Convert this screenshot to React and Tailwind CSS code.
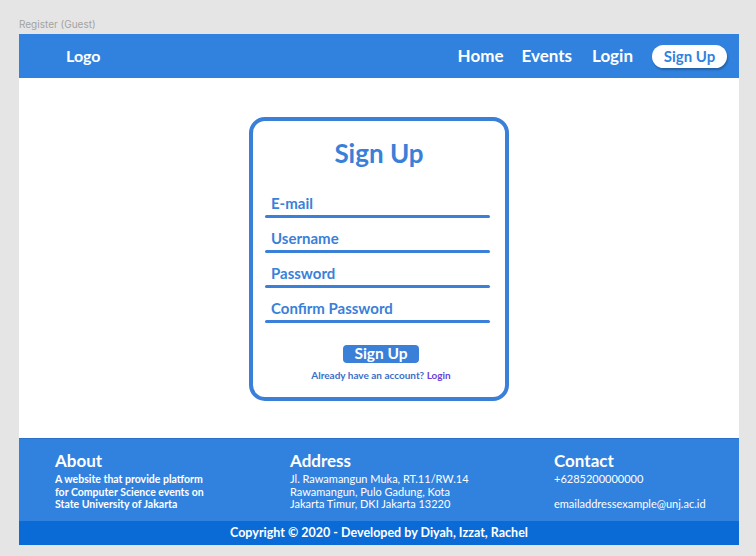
import React from "react";

const fields = ["E-mail", "Username", "Password", "Confirm Password"];

const NavBar = () => (
  <div className="h-[44px] bg-[#3182de] flex items-center pl-[47px] pr-[12px]">
    <span className="text-white font-bold text-[16px]">Logo</span>
    <div className="ml-auto flex items-center">
      <a className="text-white font-bold text-[17px]">Home</a>
      <a className="text-white font-bold text-[17px] ml-[18px]">Events</a>
      <a className="text-white font-bold text-[17px] ml-[20px]">Login</a>
      <button className="ml-[19px] h-[23px] w-[75px] rounded-full bg-white text-[#3182de] font-bold text-[15px] leading-none shadow-[1px_2px_2px_rgba(0,0,0,0.25)]">
        Sign Up
      </button>
    </div>
  </div>
);

const SignUpCard = () => (
  <div className="w-[260px] h-[284px] border-[4px] border-[#3a7fd8] rounded-[16px] bg-white flex flex-col pt-[18px] px-[12px]">
    <h1 className="text-center text-[26px] leading-[28px] font-bold text-[#3a7fd8]">Sign Up</h1>
    <div className="mt-[27px] flex flex-col gap-[11px] w-[225px]">
      {fields.map((f) => (
        <div key={f} className="flex flex-col">
          <label className="pl-[6px] text-[15px] leading-[18px] font-bold text-[#3a7fd8]">{f}</label>
          <div className="mt-[3px] h-[3px] bg-[#3a7fd8] rounded-full" />
        </div>
      ))}
    </div>
    <div className="mt-[22px] flex justify-center">
      <button className="w-[76px] h-[18px] rounded-[4px] bg-[#3a7fd8] text-white font-bold text-[15.5px] leading-none ml-[4px]">
        Sign Up
      </button>
    </div>
    <p className="mt-[7px] text-center text-[10px] leading-[11px] font-bold text-[#3a6fc8] ml-[4px]">
      Already have an account? <span className="text-[#6b3fd6]">Login</span>
    </p>
  </div>
);

const Footer = () => (
  <div className="h-[83px] bg-[#3182de] border-t border-[#2a72c8] flex pl-[36px] pt-[12px] text-white">
    <div className="w-[235px]">
      <h3 className="text-[17px] leading-[20px] font-bold">About</h3>
      <p className="mt-[2px] text-[10.5px] leading-[12.5px] font-bold">
        A website that provide platform
        <br />
        for Computer Science events on
        <br />
        State University of Jakarta
      </p>
    </div>
    <div className="w-[264px]">
      <h3 className="text-[17px] leading-[20px] font-bold">Address</h3>
      <p className="mt-[2px] text-[11px] leading-[12.5px]">
        Jl. Rawamangun Muka, RT.11/RW.14
        <br />
        Rawamangun, Pulo Gadung, Kota
        <br />
        Jakarta Timur, DKI Jakarta 13220
      </p>
    </div>
    <div>
      <h3 className="text-[17px] leading-[20px] font-bold">Contact</h3>
      <p className="mt-[2px] text-[11px] leading-[12.5px]">
        +6285200000000
        <br />
        <br />
        emailaddressexample@unj.ac.id
      </p>
    </div>
  </div>
);

export default function App() {
  return (
    <div
      className="w-[756px] h-[556px] bg-[#e5e5e5] pl-[19px] flex flex-col"
      style={{ fontFamily: "Lato, 'Liberation Sans', sans-serif" }}
    >
      <div className="h-[34px] pt-[18px] text-[10px] leading-[12px] text-[#a3a3a3]" style={{ fontFamily: "Inter, 'Liberation Sans', sans-serif" }}>
        Register (Guest)
      </div>
      <div className="w-[720px] flex flex-col">
        <NavBar />
        <main className="h-[360px] bg-white flex justify-center pt-[39px]">
          <SignUpCard />
        </main>
        <Footer />
        <div className="h-[24px] bg-[#0b6bd6] flex items-center justify-center text-white font-bold text-[12.5px]">
          Copyright © 2020 - Developed by Diyah, Izzat, Rachel
        </div>
      </div>
    </div>
  );
}
